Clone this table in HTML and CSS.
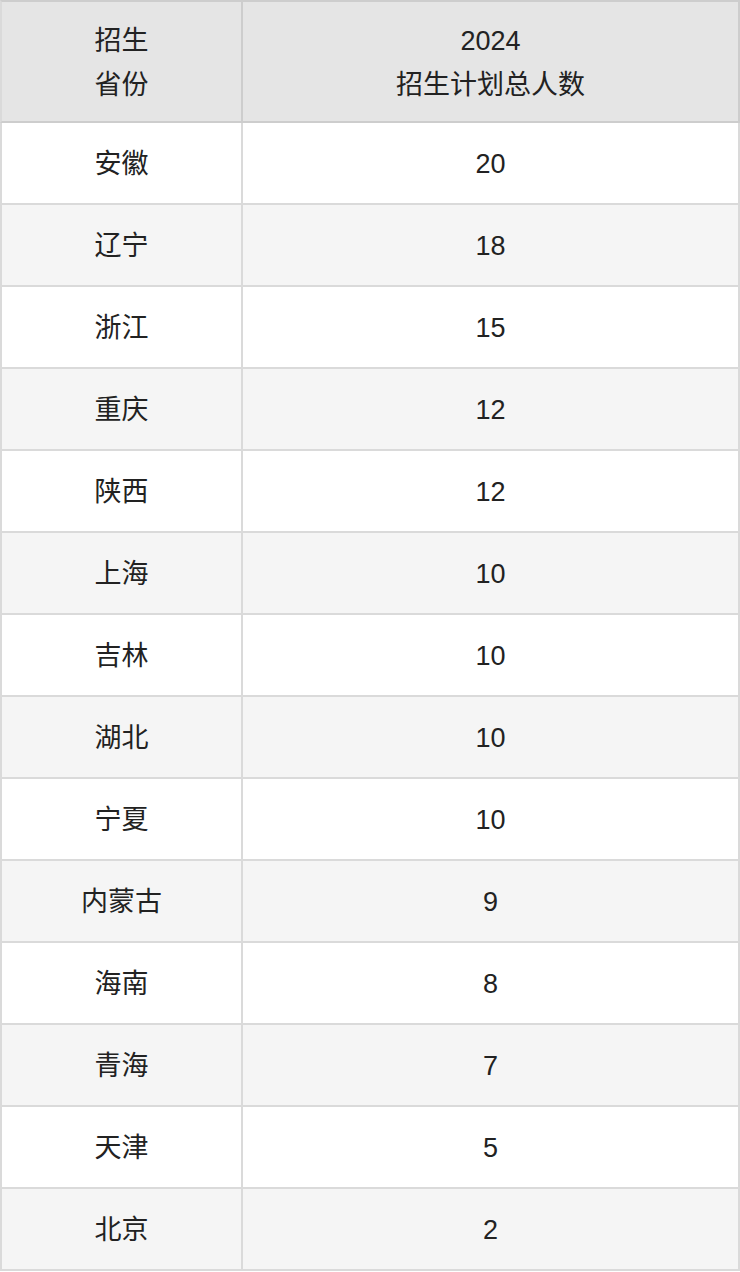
FILE: index.html
```html
<!DOCTYPE html>
<html lang="zh">
<head>
<meta charset="utf-8">
<link rel="stylesheet" href="styles.css">
</head>
<body>
<table class="plan">
  <colgroup><col class="c1"><col class="c2"></colgroup>
  <thead>
    <tr><th>招生<br>省份</th><th>2024<br>招生计划总人数</th></tr>
  </thead>
  <tbody>
    <tr><td>安徽</td><td>20</td></tr>
    <tr><td>辽宁</td><td>18</td></tr>
    <tr><td>浙江</td><td>15</td></tr>
    <tr><td>重庆</td><td>12</td></tr>
    <tr><td>陕西</td><td>12</td></tr>
    <tr><td>上海</td><td>10</td></tr>
    <tr><td>吉林</td><td>10</td></tr>
    <tr><td>湖北</td><td>10</td></tr>
    <tr><td>宁夏</td><td>10</td></tr>
    <tr><td>内蒙古</td><td>9</td></tr>
    <tr><td>海南</td><td>8</td></tr>
    <tr><td>青海</td><td>7</td></tr>
    <tr><td>天津</td><td>5</td></tr>
    <tr><td>北京</td><td>2</td></tr>
  </tbody>
</table>
</body>
</html>
```
FILE: styles.css
```css
html, body {
  margin: 0;
  padding: 0;
  background: #ffffff;
}
.plan {
  width: 740px;
  border-collapse: separate;
  border-spacing: 0;
  table-layout: fixed;
  font-family: "Liberation Sans", "Noto Sans CJK SC", sans-serif;
  font-size: 27px;
  color: #222222;
}
.c1 { width: 243px; }
.c2 { width: 497px; }
.plan th, .plan td {
  border-right: 2px solid #dadada;
  border-bottom: 2px solid #dadada;
  text-align: center;
  vertical-align: middle;
  padding: 0;
}
.plan th:first-child, .plan td:first-child {
  border-left: 2px solid #dadada;
}
.plan th {
  background: #e5e5e5;
  border-color: #cdcdcd;
  border-top: 2px solid #cdcdcd;
  font-weight: normal;
  line-height: 44px;
  padding-top: 3px;
  box-sizing: border-box;
}
.plan thead th {
  height: 123px;
}
.plan td {
  height: 82px;
  line-height: 40px;
  padding-top: 2px;
  box-sizing: border-box;
}
.plan tbody tr:nth-child(even) td {
  background: #f5f5f5;
}
```
